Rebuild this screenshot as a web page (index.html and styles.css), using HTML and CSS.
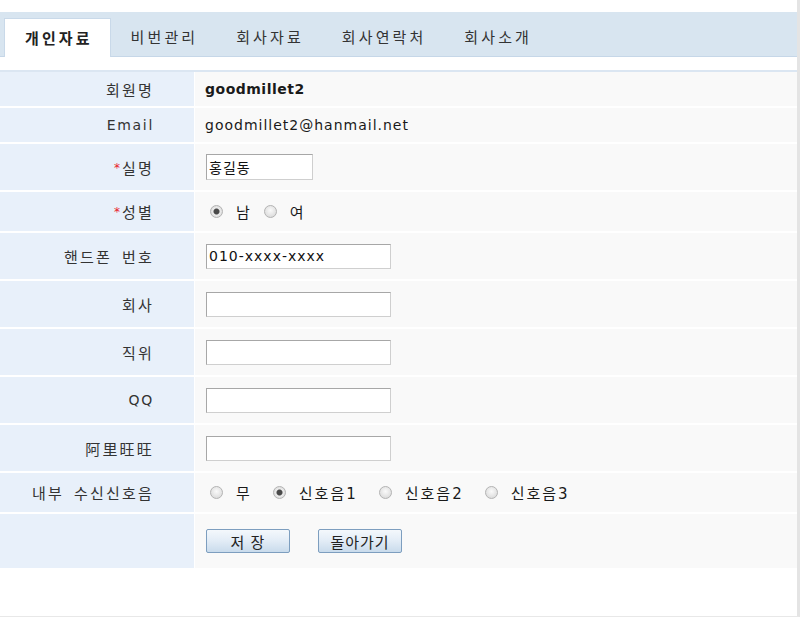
FILE: index.html
```html
<!DOCTYPE html>
<html lang="ko">
<head>
    <meta charset="UTF-8">
    <title>개인자료</title>
    <link rel="stylesheet" href="styles.css">
</head>
<body>
    <div class="page">
        <ul class="tabs">
            <li class="tab active">개인자료</li>
            <li class="tab">비번관리</li>
            <li class="tab">회사자료</li>
            <li class="tab">회사연락처</li>
            <li class="tab">회사소개</li>
        </ul>
        <table class="form-table">
            <tr class="row-text">
                <th>회원명</th>
                <td class="strong">goodmillet2</td>
            </tr>
            <tr class="row-text">
                <th class="latin">Email</th>
                <td>goodmillet2@hanmail.net</td>
            </tr>
            <tr>
                <th><span class="req">*</span>실명</th>
                <td><input type="text" class="field short" value="홍길동"></td>
            </tr>
            <tr class="row-radio">
                <th><span class="req">*</span>성별</th>
                <td class="choices tight">
                    <label class="choice"><input type="radio" name="sex" checked>남</label>
                    <label class="choice"><input type="radio" name="sex">여</label>
                </td>
            </tr>
            <tr>
                <th>핸드폰 번호</th>
                <td><input type="text" class="field" value="010-xxxx-xxxx"></td>
            </tr>
            <tr>
                <th>회사</th>
                <td><input type="text" class="field"></td>
            </tr>
            <tr>
                <th>직위</th>
                <td><input type="text" class="field"></td>
            </tr>
            <tr>
                <th class="latin">QQ</th>
                <td><input type="text" class="field"></td>
            </tr>
            <tr>
                <th>阿里旺旺</th>
                <td><input type="text" class="field"></td>
            </tr>
            <tr class="row-radio">
                <th>내부 수신신호음</th>
                <td class="choices">
                    <label class="choice"><input type="radio" name="ring">무</label>
                    <label class="choice"><input type="radio" name="ring" checked>신호음1</label>
                    <label class="choice"><input type="radio" name="ring">신호음2</label>
                    <label class="choice"><input type="radio" name="ring">신호음3</label>
                </td>
            </tr>
            <tr class="row-buttons">
                <th></th>
                <td>
                    <button class="btn">저 장</button><button class="btn">돌아가기</button>
                </td>
            </tr>
        </table>
    </div>
</body>
</html>
```

FILE: styles.css
```css
body {
    margin: 0;
    background: #ffffff;
    font-family: "DejaVu Sans", "Noto Sans CJK KR", sans-serif;
    font-size: 14px;
    color: #222;
}
.page {
    height: 617px;
    padding-top: 12px;
    box-sizing: border-box;
    border-right: 3px solid #e4e4e4;
    border-bottom: 1px solid #e8e8e8;
}
.tabs {
    display: flex;
    align-items: flex-end;
    list-style: none;
    margin: 0;
    padding: 0 0 0 4px;
    height: 45px;
    box-sizing: border-box;
    background: #d8e5f0;
    border-bottom: 1px solid #c6d7e8;
}
.tab {
    padding: 0 18px 0 20px;
    height: 38px;
    line-height: 40px;
    font-size: 15px;
    letter-spacing: 3.1px;
    color: #333;
}
.tab.active {
    background: #ffffff;
    border: 1px solid #c9d9e9;
    border-bottom: none;
    margin-bottom: -1px;
    font-weight: bold;
    color: #222;
    padding: 0 17px 0 20px;
}
.form-table {
    width: 100%;
    margin-top: 13px;
    border-collapse: collapse;
    border-top: 2px solid #dbe6f2;
}
.form-table th,
.form-table td {
    height: 46px;
    padding: 0;
    border-bottom: 2px solid #ffffff;
}
.form-table th {
    width: 154px;
    padding-right: 40px;
    background: #e8f0fa;
    text-align: right;
    font-size: 15px;
    font-weight: normal;
    color: #333;
    letter-spacing: 2.2px;
    word-spacing: 3px;
    border-right: 1px solid #ffffff;
}
.form-table th.latin {
    font-size: 14px;
    letter-spacing: 1.7px;
}
.form-table td {
    background: #f9f9f9;
    padding-left: 10px;
    letter-spacing: 1px;
    color: #1a1a1a;
}
.form-table .row-text th,
.form-table .row-text td {
    height: 34px;
}
.form-table .row-radio th,
.form-table .row-radio td {
    height: 39px;
}
.form-table .row-buttons th,
.form-table .row-buttons td {
    height: 54px;
    border-bottom: none;
}
.form-table td.strong {
    font-weight: bold;
    letter-spacing: 0.5px;
}
.req {
    color: #e8202a;
    font-size: 12px;
    letter-spacing: 2px;
    vertical-align: 2px;
}
.field {
    display: block;
    margin: 0 0 0 1px;
    width: 185px;
    height: 25px;
    box-sizing: border-box;
    border: 1px solid #a7a7a7;
    border-right-color: #cfcfcf;
    border-bottom-color: #cfcfcf;
    background: #ffffff;
    padding: 0 2px;
    font-family: "DejaVu Sans", "Noto Sans CJK KR", sans-serif;
    font-size: 14px;
    letter-spacing: 1px;
    color: #111;
}
.field.short {
    width: 107px;
    height: 26px;
}
.choices {
    font-size: 0;
}
.choice {
    display: inline-flex;
    align-items: center;
    margin-right: 15px;
    font-size: 15px;
    letter-spacing: 2px;
}
.tight .choice {
    margin-right: 6px;
}
.choice input {
    appearance: none;
    -webkit-appearance: none;
    width: 13px;
    height: 13px;
    margin: 0 13px 0 5px;
    border: 1px solid #b4b4b4;
    border-radius: 50%;
    background: radial-gradient(circle at 50% 40%, #fafafa, #d4d4d4);
    box-sizing: border-box;
}
.choice input:checked {
    background: radial-gradient(circle, #4a4a4a 0 2.5px, #9a9a9a 3px, #ececec 3.5px, #d0d0d0);
}
.btn {
    width: 84px;
    height: 24px;
    margin: 0 27px 0 1px;
    padding: 0;
    border: 1px solid #7d9ebf;
    border-radius: 2px;
    background: linear-gradient(to bottom, #f4f8fc, #e2ecf6 50%, #c9dbec);
    font-family: "Noto Sans CJK KR", sans-serif;
    font-size: 15px;
    letter-spacing: 1px;
    color: #222;
}
```
